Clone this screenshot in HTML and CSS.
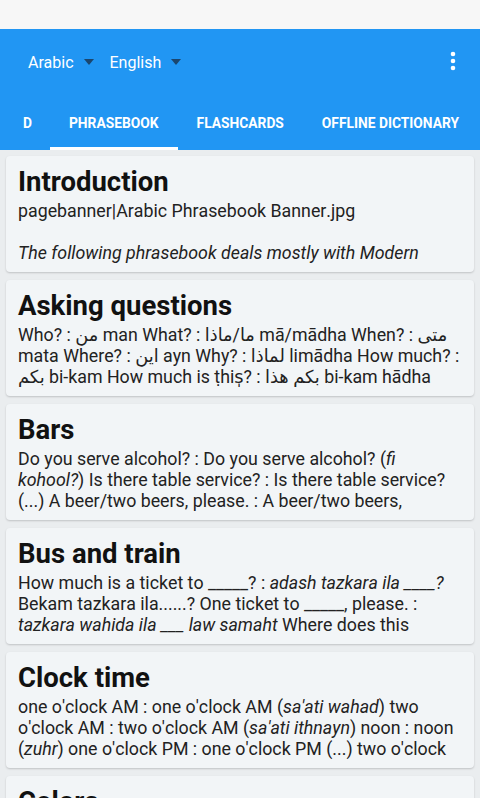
FILE: index.html
```html
<!DOCTYPE html>
<html lang="en">
<head>
<meta charset="utf-8">
<title>Phrasebook</title>
<link rel="stylesheet" href="styles.css">
</head>
<body>
<div class="status"></div>
<header class="appbar">
  <div class="toolbar">
    <div class="lang">Arabic <span class="caret"></span></div>
    <div class="lang">English <span class="caret"></span></div>
    <div class="spacer"></div>
    <svg class="more" width="6" height="20" viewBox="0 0 6 20"><circle cx="3" cy="3" r="2.3" fill="#fff"/><circle cx="3" cy="10" r="2.3" fill="#fff"/><circle cx="3" cy="17" r="2.3" fill="#fff"/></svg>
  </div>
  <nav class="tabs">
    <div class="tab first">D</div>
    <div class="tab active">PHRASEBOOK</div>
    <div class="tab">FLASHCARDS</div>
    <div class="tab">OFFLINE DICTIONARY</div>
  </nav>
</header>
<main class="list">
  <section class="card">
    <h2>Introduction</h2>
    <p>pagebanner|Arabic Phrasebook Banner.jpg<br><br><i>The following phrasebook deals mostly with Modern Standard Arabic</i></p>
  </section>
  <section class="card">
    <h2>Asking questions</h2>
    <p>Who? : من man What? : ما/ماذا mā/mādha When? : متى mata Where? : اين ayn Why? : لماذا limādha How much? : بكم bi-kam How much is ṭhis̩? : بكم هذا bi-kam hādha</p>
  </section>
  <section class="card">
    <h2>Bars</h2>
    <p>Do you serve alcohol? : Do you serve alcohol? (<i>fi kohool?</i>) Is there table service? : Is there table service? (...) A beer/two beers, please. : A beer/two beers, please.</p>
  </section>
  <section class="card">
    <h2>Bus and train</h2>
    <p>How much is a ticket to _____? : <i>adash tazkara ila ____?</i> Bekam tazkara ila......? One ticket to _____, please. : <i>tazkara wahida ila ___ law samaht</i> Where does this train/bus go?</p>
  </section>
  <section class="card">
    <h2>Clock time</h2>
    <p>one o'clock AM : one o'clock AM (<i>sa'ati wahad</i>) two o'clock AM : two o'clock AM (<i>sa'ati ithnayn</i>) noon : noon (<i>zuhr</i>) one o'clock PM : one o'clock PM (...) two o'clock PM</p>
  </section>
  <section class="card">
    <h2>Colors</h2>
    <p>black : black white : white</p>
  </section>
</main>
</body>
</html>
```

FILE: styles.css
```css
html, body {
  margin: 0;
  padding: 0;
}
body {
  width: 480px;
  height: 798px;
  overflow: hidden;
  background: #eaedef;
  font-family: Roboto, "DejaVu Sans", sans-serif;
}
.status {
  height: 29px;
  background: #f7f7f7;
}
.appbar {
  background: #2196f3;
  color: #fff;
}
.toolbar {
  height: 67px;
  display: flex;
  align-items: center;
  padding: 0 24px 0 28px;
}
.lang {
  font-size: 16px;
  display: flex;
  align-items: center;
  margin-right: 16px;
}
.caret {
  display: inline-block;
  width: 0;
  height: 0;
  border-left: 5.5px solid transparent;
  border-right: 5.5px solid transparent;
  border-top: 6px solid #1b466e;
  margin-left: 10px;
  margin-top: -2px;
}
.spacer { flex: 1; }
.more { display: block; margin-top: -4px; }
.tabs {
  display: flex;
  height: 54px;
  white-space: nowrap;
  overflow: hidden;
}
.tab {
  font-size: 13.8px;
  font-weight: bold;
  padding: 2px 19px 0 19px;
  display: flex;
  align-items: center;
  border-bottom: 3px solid transparent;
}
.tab.first { padding: 2px 18px 0 23px; }
.tab.active { border-bottom-color: #fff; }
.list {
  display: flex;
  flex-direction: column;
  gap: 8px;
  padding: 6px 6px 0 6px;
}
.card {
  flex: none;
  height: 116px;
  box-sizing: border-box;
  background: #f2f5f7;
  border-radius: 4px;
  box-shadow: 0 1px 2px rgba(0,0,0,0.18);
  padding: 10px 12px 0 12px;
  overflow: hidden;
}
.card h2 {
  margin: 0 0 2px 0;
  font-size: 27.5px;
  line-height: 32px;
  font-weight: bold;
  color: #111;
}
.card p {
  margin: 0;
  font-size: 17.8px;
  line-height: 21px;
  color: #222;
  font-kerning: none;
  max-height: 63px;
  overflow: hidden;
}
```
